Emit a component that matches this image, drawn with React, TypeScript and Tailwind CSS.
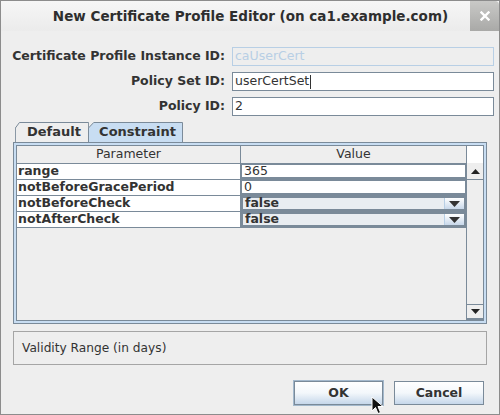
import { ReactNode } from "react";

const font = { fontFamily: '"DejaVu Sans", Verdana, sans-serif' };

function Field({ value, disabled, caret }: { value: string; disabled?: boolean; caret?: boolean }) {
  return (
    <div
      className={
        "w-[262px] h-[19px] flex items-center px-[2px] text-[12.5px] leading-none " +
        (disabled ? "border border-[#b8cfe5] bg-[#eeeeee] text-[#b8cfe5]" : "border border-[#7a8a99] bg-white text-[#333333]")
      }
    >
      <span>{value}</span>
      {caret && <span className="w-px h-[14px] bg-[#333333] ml-px" />}
    </div>
  );
}

function FormRow({ label, children }: { label: string; children: ReactNode }) {
  return (
    <div className="flex items-center h-[19px]">
      <div className="w-[225px] pr-[1px] text-right font-bold text-[12.5px] text-[#333333]">{label}</div>
      <div className="ml-[6px]">{children}</div>
    </div>
  );
}

function Tab({ label, selected }: { label: string; selected?: boolean }) {
  return (
    <div className={"relative flex items-center justify-center h-[20px] " + (selected ? "w-[95px] -ml-px" : "w-[74px]")}>
      <svg className="absolute inset-0" width="100%" height="100%" preserveAspectRatio="none" viewBox="0 0 100 20">
        <path
          d="M0.5 20 L0.5 6 L6 0.5 L99.5 0.5 L99.5 20"
          fill={selected ? "#c8ddf2" : "#eeeeee"}
          stroke="#7a8a99"
          strokeWidth="1"
          vectorEffect="non-scaling-stroke"
        />
      </svg>
      <span className="relative font-bold text-[13px] text-[#333333] pl-[4px]">{label}</span>
    </div>
  );
}

function Combo({ value }: { value: string }) {
  return (
    <div className="flex h-full border-2 border-[#7a8a99]">
      <div className="flex-1 flex items-center pl-[2px] bg-[#e9edf1] font-bold text-[12.5px] text-[#333333] border-r border-[#b8cfe5]">
        {value}
      </div>
      <div className="w-[19px] flex items-center justify-center bg-gradient-to-b from-[#ffffff] to-[#c8d8ea]">
        <svg width="11" height="6" viewBox="0 0 11 6">
          <path d="M0 0 H11 L5.5 6 Z" fill="#333333" />
        </svg>
      </div>
    </div>
  );
}

function TextCell({ value }: { value: string }) {
  return (
    <div className="flex items-center h-full bg-white border border-[#7a8a99] border-b-2 pl-[2px] text-[12.5px] text-[#333333]">
      {value}
    </div>
  );
}

const rows = [
  { name: "range", cell: <TextCell value="365" /> },
  { name: "notBeforeGracePeriod", cell: <TextCell value="0" /> },
  { name: "notBeforeCheck", cell: <Combo value="false" /> },
  { name: "notAfterCheck", cell: <Combo value="false" /> },
];

function Cursor() {
  return (
    <svg className="absolute left-[370px] top-[395px]" width="14" height="20" viewBox="0 0 14 20">
      <path d="M1 1 L1 15 L4.5 11.5 L7 17.5 L9.5 16.5 L7 10.5 L12 10.5 Z" fill="#111111" stroke="#ffffff" strokeWidth="1" />
    </svg>
  );
}

export default function App() {
  return (
    <div className="relative w-[500px] h-[415px] bg-[#eeeeee] border border-[#8c8c8c] flex flex-col overflow-hidden" style={font}>
      {/* Title bar */}
      <div className="h-[30px] flex items-stretch bg-gradient-to-b from-[#f6f6f6] to-[#ebebeb] shrink-0">
        <div className="flex-1 flex items-center justify-center pl-[30px] font-bold text-[13.5px] text-[#2e2e2e]">
          New Certificate Profile Editor (on ca1.example.com)
        </div>
        <div className="w-[29px] flex items-center justify-center bg-gradient-to-b from-[#c9c9c7] to-[#a9a9a7] rounded-tr-[4px]">
          <svg width="10" height="10" viewBox="0 0 10 10">
            <path d="M1.5 1.5 L8.5 8.5 M8.5 1.5 L1.5 8.5" stroke="#ffffff" strokeWidth="2.4" strokeLinecap="square" />
          </svg>
        </div>
      </div>

      {/* Form fields */}
      <div className="flex flex-col gap-[6px] mt-[16px]">
        <FormRow label="Certificate Profile Instance ID:">
          <Field value="caUserCert" disabled />
        </FormRow>
        <FormRow label="Policy Set ID:">
          <Field value="userCertSet" caret />
        </FormRow>
        <FormRow label="Policy ID:">
          <Field value="2" />
        </FormRow>
      </div>

      {/* Tabs */}
      <div className="flex items-end ml-[14px] mt-[6px] h-[20px]">
        <Tab label="Default" />
        <Tab label="Constraint" selected />
      </div>

      {/* Tab content */}
      <div className="ml-[12px] w-[474px] h-[182px] border border-[#7a8a99] p-[2px] bg-[#c8ddf2]">
        <div className="h-full flex border border-[#7a8a99] bg-[#eeeeee] text-[#333333]">
          <div className="flex-1 flex flex-col">
            <div className="flex h-[18px] border-b border-[#7a8a99] text-[12.5px]">
              <div className="w-[224px] flex items-center justify-center border-r border-[#7a8a99]">Parameter</div>
              <div className="flex-1 flex items-center justify-center">Value</div>
            </div>
            {rows.map((r) => (
              <div key={r.name} className="flex h-[16px] border-b border-[#7a8a99] bg-white">
                <div className="w-[224px] flex items-center pl-[1px] font-bold text-[12.5px] border-r border-[#7a8a99]">{r.name}</div>
                <div className="flex-1">{r.cell}</div>
              </div>
            ))}
          </div>
          {/* Scrollbar */}
          <div className="w-[17px] flex flex-col border-l border-[#7a8a99]">
            <div className="h-[18px] bg-white border-b border-[#eeeeee]" />
            <div className="h-[16px] flex items-center justify-center border-b border-[#7a8a99] bg-[#eeeeee]">
              <svg width="9" height="5" viewBox="0 0 9 5">
                <path d="M0 5 H9 L4.5 0 Z" fill="#222222" />
              </svg>
            </div>
            <div className="flex-1" />
            <div className="h-[16px] flex items-center justify-center border-t border-[#7a8a99] border-b-2 bg-[#eeeeee]">
              <svg width="9" height="5" viewBox="0 0 9 5">
                <path d="M0 0 H9 L4.5 5 Z" fill="#222222" />
              </svg>
            </div>
          </div>
        </div>
      </div>

      {/* Description */}
      <div className="ml-[12px] mt-[7px] w-[474px] h-[34px] border border-[#a5a5a5] flex items-center pl-[8px] text-[12.2px] text-[#333333]">
        Validity Range (in days)
      </div>

      {/* Buttons */}
      <div className="flex justify-end gap-[11px] mt-[16px] mr-[15px]">
        <button className="w-[89px] h-[24px] border border-[#7a8a99] outline outline-1 outline-[#a3b8cc] bg-gradient-to-b from-[#ffffff] via-[#f3f7fb] to-[#c6d7ea] font-bold text-[12.5px] text-[#333333]">
          OK
        </button>
        <button className="w-[90px] h-[24px] border border-[#7a8a99] bg-gradient-to-b from-[#ffffff] via-[#f3f7fb] to-[#c6d7ea] font-bold text-[12.5px] text-[#333333]">
          Cancel
        </button>
      </div>

      <Cursor />
    </div>
  );
}
